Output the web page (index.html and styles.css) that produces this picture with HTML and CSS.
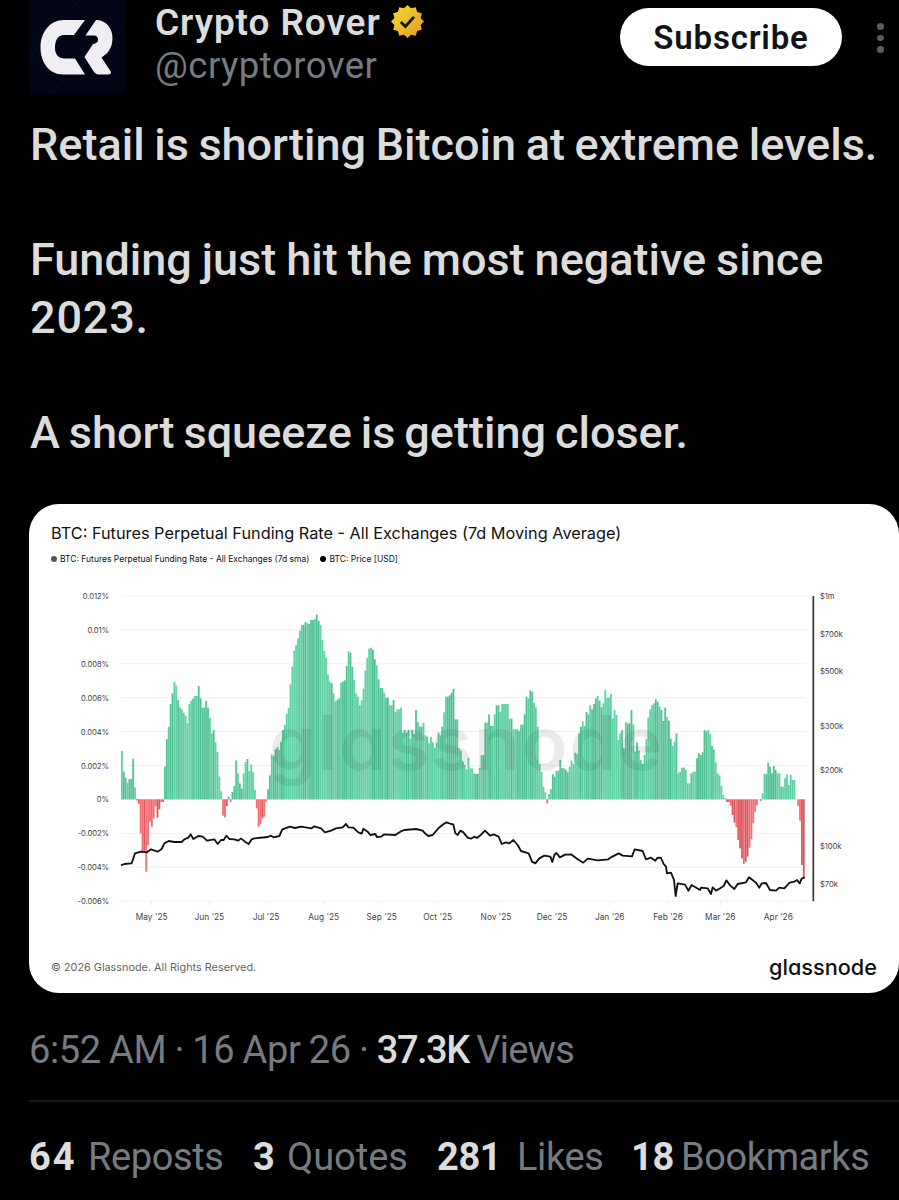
FILE: index.html
```html
<!DOCTYPE html>
<html lang="en">
    <head>
        <meta charset="utf-8">
        <title>Crypto Rover</title>
        <link rel="stylesheet" href="styles.css">
    </head>
    <body>
        <div class="post">
            <div class="header">
                <svg class="avatar" viewBox="0 0 97 95">
                    <path fill="#020516" d="M0 0h97v89q0 6-6 6h-85q-6 0-6-6z"/>
                    <path fill="none" stroke="#0b1024" d="M0 58L52 0M22 95l20-22M44 0l12 14M97 20L78 40"/>
                    <path fill="#efeef2" d="M56 20L45 35H35C29 35 26 40 26 47.500C26 55 30 58.500 35 58.500H46L56 74.500H34C20 74.500 11.500 62 11.500 47.500C11.500 32 21 20 35 20Z"/>
                    <path fill="#efeef2" d="M67 20C77 20 83.500 28 83.500 38C83.500 49 78 54 72.500 57.500L82 72Q82 74.500 79 74.500H70Q67 74.500 65 72L55.500 57L64 44Q69 43 69 40Q69 35.500 65 35.500H56.500Z"/>
                </svg>
                <div class="names">
                    <div class="name">
                        <span class="name-text">Crypto Rover</span>
                        <svg class="badge" viewBox="0 0 32 32">
                            <defs>
                                <linearGradient id="gold" x1="0" y1="0" x2="1" y2="1">
                                    <stop offset="0" stop-color="#f8d938"/>
                                    <stop offset="1" stop-color="#dd9d20"/>
                                </linearGradient>
                            </defs>
                            <path id="seal" fill="url(#gold)" d=""/>
                            <path fill="none" stroke="#15130a" stroke-width="2.800" d="M9.500 16.500l4.500 4.300 8.300-9.300"/>
                        </svg>
                    </div>
                    <div class="handle">@cryptorover</div>
                </div>
                <button class="subscribe"><span>Subscribe</span></button>
                <div class="more"><i></i><i></i><i></i></div>
            </div>
            <div class="text">
                <p class="line1">Retail is shorting Bitcoin at extreme levels.</p>
                <p class="line2">Funding just hit the most negative since<br><span class="year">2023.</span></p>
                <p class="line3">A short squeeze is getting closer.</p>
            </div>
            <div class="card">
                <h3 class="chart-title">BTC: Futures Perpetual Funding Rate - All Exchanges (7d Moving Average)</h3>
                <div class="legend">
                    <span class="legend-item rate">BTC: Futures Perpetual Funding Rate - All Exchanges (7d sma)</span>
                    <span class="legend-item price">BTC: Price [USD]</span>
                </div>
                <svg id="chart" class="chart" viewBox="0 0 2610 1020"></svg>
                <div class="card-footer">
                    <span class="copyright">© 2026 Glassnode. All Rights Reserved.</span>
                    <span class="brand">glassnode</span>
                </div>
            </div>
            <div class="time"><span class="date">6:52 AM · 16 Apr 26 · </span><b>37.3K</b><span class="views"> Views</span></div>
            <div class="stats">
                <span class="stat reposts"><b>64</b><span>Reposts</span></span>
                <span class="stat quotes"><b>3</b><span>Quotes</span></span>
                <span class="stat likes"><b>281</b><span>Likes</span></span>
                <span class="stat bookmarks"><b>18</b><span>Bookmarks</span></span>
            </div>
        </div>
        <script src="chart.js"></script>
    </body>
</html>
```

FILE: styles.css
```css
body {
    margin: 0;
    background: #000;
    color: #dcdcdc;
    font-family: Roboto, "Liberation Sans", sans-serif;
}
.post {
    width: 899px;
    height: 1200px;
    overflow: hidden;
    padding-left: 29px;
    box-sizing: border-box;
}
.header {
    display: flex;
    align-items: flex-start;
    height: 95px;
}
.avatar {
    width: 97px;
    height: 95px;
    margin-right: 29px;
}
.names {
    width: 465px;
}
.name {
    display: flex;
    align-items: center;
    height: 44px;
    font-size: 37px;
    font-weight: 600;
    letter-spacing: 0.9px;
}
.badge {
    width: 33px;
    height: 33px;
    margin: 0 0 2px 10px;
}
.handle {
    font-size: 36.500px;
    line-height: 44px;
    letter-spacing: 0.5px;
    color: #767b82;
}
.subscribe {
    width: 222px;
    height: 58px;
    margin: 8px 0 0;
    padding: 0;
    border: 0;
    border-radius: 29px;
    background: #fff;
    color: #0f1419;
    font: 600 33px Roboto, sans-serif;
    letter-spacing: 0.8px;
}
.more {
    display: flex;
    flex-direction: column;
    gap: 5px;
    margin: 23px 0 0 35px;
}
.more i {
    width: 7px;
    height: 6.500px;
    border-radius: 50%;
    background: #5c5c5c;
}
.text {
    height: 409px;
    padding: 21px 0 0 1px;
    box-sizing: border-box;
    font-size: 45px;
    font-weight: 500;
    line-height: 57.500px;
}
.text p {
    margin: 0 0 57.500px;
    white-space: nowrap;
}
.line1 {
    word-spacing: -1.600px;
}
.line2 {
    word-spacing: -1.200px;
}
.line3 {
    word-spacing: -2.200px;
}
.year {
    letter-spacing: 0.8px;
}
.card {
    height: 489px;
    border-radius: 30px;
    background: #fff;
    color: #111;
    font-family: Inter, sans-serif;
    overflow: hidden;
}
.chart-title {
    margin: 0;
    padding: 18px 0 1px 22px;
    font-size: 16.300px;
    font-weight: 400;
    line-height: 22px;
}
.legend {
    display: flex;
    align-items: center;
    gap: 11px;
    height: 14px;
    padding: 7px 0 0 22px;
    font-size: 8.500px;
}
.legend-item::before {
    content: "";
    display: inline-block;
    width: 6px;
    height: 6px;
    margin-right: 3px;
    border-radius: 50%;
    background: #000;
}
.rate::before {
    background: #555;
}
.chart {
    display: block;
    width: 870px;
    height: 340px;
    margin-top: 24px;
}
.chart text {
    font: 25px Inter, sans-serif;
    fill: #444;
}
.chart .percent {
    font-size: 23px;
    letter-spacing: -0.3px;
}
.chart .watermark {
    font: 600 225px Inter, sans-serif;
    font-feature-settings: "cv11";
    fill: #000;
    fill-opacity: 0.08;
}
.card-footer {
    display: flex;
    justify-content: space-between;
    align-items: center;
    padding: 24px 22px 0 22px;
    height: 26px;
}
.copyright {
    font-size: 10.850px;
    color: #666;
}
.brand {
    font-size: 21.700px;
    font-weight: 500;
    font-feature-settings: "cv11";
}
.time {
    padding-top: 34px;
    height: 73px;
    font-size: 38px;
    line-height: 46px;
    color: #767b82;
    white-space: pre;
    border-bottom: 2px solid #17181a;
}
.date {
    letter-spacing: -0.4px;
    word-spacing: -0.700px;
}
.time b {
    font-weight: 500;
    letter-spacing: -1.500px;
    color: #dcdcdc;
}
.views {
    letter-spacing: -0.8px;
    word-spacing: -1px;
}
.stats {
    display: grid;
    grid-template-columns: 224px 184px 194px auto;
    padding-top: 32px;
    font-size: 38px;
    line-height: 46px;
    letter-spacing: -0.400px;
    color: #767b82;
}
.stat {
    display: grid;
    white-space: nowrap;
}
.stat b {
    color: #dcdcdc;
}
.reposts {
    grid-template-columns: 59px auto;
}
.reposts b {
    letter-spacing: 2px;
}
.quotes {
    grid-template-columns: 34px auto;
    letter-spacing: 0;
}
.likes {
    grid-template-columns: 80px auto;
}
.bookmarks {
    grid-template-columns: 50px auto;
}
```

FILE: chart.js
```js
var svg = document.getElementById('chart');
var LEFT = 276, ZERO = 628, STEP = 5.62;

function add(tag, attrs, text) {
    var el = document.createElementNS('http://www.w3.org/2000/svg', tag);
    for (var k in attrs) el.setAttribute(k, attrs[k]);
    if (text) el.textContent = text;
    svg.appendChild(el);
    return el;
}

// [offset, bar end]
var rate = [
    [0,483],[5,545],[11,563],[17,579],[22,567],[33,506],[39,592],[44,631],[50,641],[56,730],[61,783],[72,845],[78,765],[84,695],[90,710],[96,685],[101,648],[107,683],[112,658],[118,636],
    [127,530],[134,447],[140,410],[146,342],[151,310],[157,276],[162,287],[167,330],[173,353],[178,358],[184,368],[190,377],[195,400],[201,342],[206,332],[212,326],[218,318],[228,288],[234,325],[239,353],[250,332],[256,353],[262,383],[268,430],[274,420],[280,457],[286,486],[292,560],[298,604],
    [303,677],[309,682],[315,648],[320,620],[326,636],[332,606],[337,588],[342,511],[348,550],[353,580],[359,596],[365,550],[371,516],[376,507],[382,543],[387,523],[392,546],[398,600],[404,655],[410,710],[416,703],[421,685],[427,680],[433,635],
    [438,598],[444,556],[450,493],[456,498],[461,478],[467,472],[472,480],[478,455],[483,420],[489,405],[494,372],[500,354],[506,283],[512,230],[517,182],[523,165],[529,145],[534,122],[540,105],[548,108],[551,96],[557,100],[563,102],[568,90],[580,87],[584,74],[590,92],[596,105],[601,150],[607,183],[613,203],[618,254],[624,276],[630,280],[635,310],[640,334],[647,330],[652,325],[658,278],[663,275],[669,271],[674,228],[680,184],[686,188],[691,230],[697,270],[702,310],[708,320],[714,346],[720,331],[725,296],[730,241],[736,204],[742,176],[748,173],[753,180],[759,208],[765,226],[770,268],[776,294],[787,308],[793,323],[804,346],[815,330],[820,365],[826,358],[838,353],
    [843,428],[849,420],[854,428],[860,420],[866,446],[872,420],[877,432],[883,360],[888,396],[894,410],[905,398],[911,436],[917,440],[922,460],[928,441],[934,456],[940,473],[946,458],[951,427],[957,436],[963,410],[968,367],[974,320],[980,306],[985,316],[990,308],[996,296],[1002,388],[1008,430],[1013,475],[1019,482],[1024,515],[1030,525],[1036,538],[1041,503],[1047,535],[1053,550],[1064,552],[1070,515],[1075,533],[1081,495],[1087,460],
    [1092,398],[1098,373],[1104,375],[1109,408],[1115,393],[1120,373],[1126,346],[1132,381],[1137,366],[1142,342],[1154,342],[1160,350],[1165,386],[1171,381],[1176,418],[1188,423],[1194,412],[1199,404],[1205,390],[1210,373],[1214,320],[1220,325],[1226,301],[1231,305],[1237,339],[1243,352],[1249,410],[1254,522],[1260,545],[1266,590],[1271,607],[1277,640],[1282,612],[1288,597],[1294,553],[1300,560],[1305,542],[1316,510],[1322,535],[1333,540],[1339,547],[1345,530],[1350,512],[1356,522],[1361,488],[1367,493],
    [1372,430],[1378,410],[1383,394],[1389,408],[1394,366],[1400,373],[1405,346],[1411,358],[1416,342],[1422,325],[1428,318],[1433,332],[1439,352],[1444,340],[1450,300],[1456,323],[1467,312],[1473,385],[1479,360],[1484,375],[1489,450],[1495,430],[1500,420],[1506,475],[1511,396],[1517,400],[1528,360],[1534,403],[1539,485],[1545,457],[1550,482],[1556,510],[1562,522],[1568,495],[1574,447],[1579,383],[1585,358],[1591,346],[1596,340],[1602,328],[1607,335],[1613,350],[1619,360],[1625,393],[1630,353],[1636,381],[1641,392],[1647,446],[1653,468],[1659,455],[1664,430],
    [1669,550],[1675,545],[1680,533],[1692,540],[1697,580],[1708,550],[1714,545],[1724,505],[1730,490],[1736,495],[1742,487],[1747,420],[1753,424],[1758,420],[1764,432],[1770,468],[1776,478],[1782,517],[1788,550],[1794,556],[1799,588],[1804,615],[1810,624],[1816,636],[1827,647],[1831,675],[1837,698],[1843,712],[1848,750],[1854,775],[1860,805],[1865,822],[1871,815],[1876,800],[1882,773],[1888,748],[1893,700],[1899,665],[1905,646],[1910,628],[1916,632],[1921,610],[1927,552],[1937,518],[1943,530],[1948,550],[1954,528],[1960,540],[1966,550],[1975,590],[1986,580],[1991,565],[1996,553],[2001,585],[2006,555],[2012,570],[2022,628],[2027,648],[2033,662],[2036,692],[2041,825],[2046,865]
];

var price = '0,826 10,822 32,820 42,790 60,785 78,787 90,778 110,785 122,777 130,760 143,753 160,756 182,756 190,748 202,743 209,733 217,747 232,738 245,740 258,752 280,748 290,762 300,750 308,750 316,737 325,747 340,748 352,752 360,745 372,755 383,762 392,748 400,745 440,741 450,737 458,742 475,738 484,718 507,710 522,714 540,710 572,715 580,709 600,715 612,727 630,722 645,715 665,712 675,702 682,712 697,713 712,727 722,731 727,716 740,725 748,735 763,732 768,741 780,740 790,733 823,735 838,725 850,720 885,717 905,722 912,730 922,738 935,735 952,715 968,702 977,697 990,702 997,703 1003,730 1010,735 1018,722 1027,727 1040,743 1050,746 1060,740 1068,744 1078,736 1092,722 1107,737 1118,733 1133,740 1142,762 1155,757 1165,760 1177,750 1190,765 1200,783 1223,790 1233,815 1243,820 1255,805 1270,797 1288,800 1294,816 1300,795 1306,789 1317,802 1332,794 1350,793 1370,808 1387,818 1400,806 1430,811 1462,808 1470,802 1493,790 1505,797 1533,799 1541,778 1565,783 1575,808 1590,803 1603,812 1610,803 1620,804 1628,822 1635,830 1638,850 1650,848 1659,870 1664,918 1670,880 1692,884 1702,902 1712,885 1737,900 1740,893 1760,895 1770,912 1775,892 1785,902 1800,893 1808,888 1816,871 1828,887 1840,897 1850,882 1875,877 1884,862 1905,878 1915,893 1922,880 1935,879 1947,900 1965,902 1975,893 1990,895 2006,878 2020,875 2028,870 2036,880 2042,866 2051,862';

// grid and left axis
['0.012%', '0.01%', '0.008%', '0.006%', '0.004%', '0.002%', '0%', '-0.002%', '-0.004%', '-0.006%'].forEach(function (label, i) {
    var y = 18 + i * 101.7;
    add('line', {x1: LEFT, x2: 2330, y1: y, y2: y, stroke: '#f0f0f0', 'stroke-width': 3});
    add('text', {'class': 'percent', x: 240, y: y + 9, 'text-anchor': 'end'}, label);
});

// daily bars
var k = 0;
for (var i = 0; i < 365; i++) {
    var x = i * STEP;
    while (k < rate.length - 1 && rate[k + 1][0] <= x + 2) k++;
    var y = rate[k][1];
    var dark = Math.sin(i * 0.33) + Math.sin(i * 1.7) > 0.2;
    var color = y < ZERO ? (dark ? '#50c094' : '#5dd0a2') : (dark ? '#d9545c' : '#f26a6d');
    add('rect', {x: LEFT + x, y: Math.min(y, ZERO), width: STEP, height: Math.abs(y - ZERO), fill: color});
    add('rect', {x: LEFT + x + 4, y: Math.min(y, ZERO), width: 1.6, height: Math.abs(y - ZERO), fill: '#fff', 'fill-opacity': 0.22});
}

add('text', {'class': 'watermark', x: 720, y: 540, textLength: 1180}, 'glassnode');

add('polyline', {
    points: price.split(' ').map(function (p) {
        var c = p.split(',');
        return (LEFT + Number(c[0])) + ',' + c[1];
    }).join(' '),
    fill: 'none', stroke: '#111', 'stroke-width': 5.5, 'stroke-linejoin': 'round'
});

// right axis
add('line', {x1: 2353, x2: 2353, y1: 18, y2: 934, stroke: '#333', 'stroke-width': 5});
[['$1m', 18], ['$700k', 133], ['$500k', 243], ['$300k', 409], ['$200k', 541], ['$100k', 767], ['$70k', 883]].forEach(function (t) {
    add('text', {'class': 'percent', x: 2373, y: t[1] + 9}, t[0]);
});

// months
[["May '25", 368], ["Jun '25", 541], ["Jul '25", 711], ["Aug '25", 884], ["Sep '25", 1058], ["Oct '25", 1226], ["Nov '25", 1401], ["Dec '25", 1569], ["Jan '26", 1742], ["Feb '26", 1917], ["Mar '26", 2074], ["Apr '26", 2248]].forEach(function (m) {
    add('line', {x1: m[1], x2: m[1], y1: 934, y2: 948, stroke: '#eee', 'stroke-width': 3});
    add('text', {x: m[1], y: 990, 'text-anchor': 'middle'}, m[0]);
});

// verified seal outline
var pts = [];
for (var a = 0; a < 24; a++) {
    var r = a % 2 ? 13.2 : 16;
    pts.push((16 + r * Math.sin(a * Math.PI / 12)).toFixed(2) + ' ' + (16 - r * Math.cos(a * Math.PI / 12)).toFixed(2));
}
document.getElementById('seal').setAttribute('d', 'M' + pts.join('L') + 'Z');
```
